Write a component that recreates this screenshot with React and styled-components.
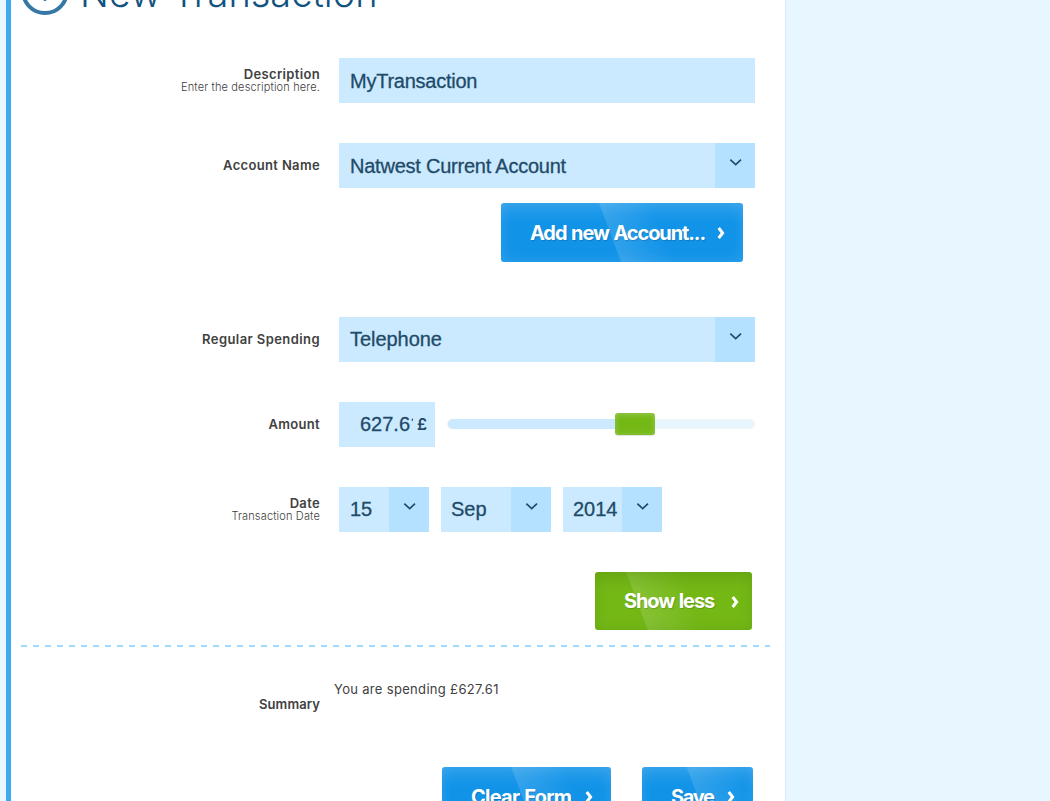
import React from "react";
import styled, { createGlobalStyle } from "styled-components";

const Global = createGlobalStyle`
  *, *::before, *::after { box-sizing: border-box; }
  html, body { margin: 0; height: 801px; overflow: hidden; background: #e8f6ff; }
  body { font-family: Inter, "Liberation Sans", sans-serif; color: #414141; }
  button, input { font: inherit; border: 0; border-radius: 0; padding: 0; margin: 0; }
`;

const Panel = styled.main`
  width: 780px;
  height: 801px;
  margin-left: 6px;
  padding: 0 15px 0 10px;
  overflow: hidden;
  background: #fff;
  border-left: 5px solid #40a9ee;
  border-right: 1px solid #d9e8f2;
`;

const Header = styled.header`
  display: flex;
  align-items: center;
  gap: 11px;
  height: 48px;
  margin-top: -33px;
  color: #11527f;
`;

const Title = styled.h1`
  margin: 0;
  padding-top: 3px;
  font-size: 38px;
  font-weight: 300;
  line-height: 48px;
  letter-spacing: 0;
  white-space: nowrap;
`;

const Row = styled.section`
  display: grid;
  grid-template-columns: 299px 416px;
  column-gap: 19px;
  align-items: center;
  height: 45px;
  margin-top: ${(p) => p.$top ?? 40}px;
`;

const Label = styled.div`
  padding-top: ${(p) => p.$drop ?? 0}px;
  text-align: right;
  font-size: 13px;
  font-weight: 600;
  line-height: 13px;
  letter-spacing: ${(p) => p.$spacing ?? 0.34}px;
  white-space: nowrap;
`;

const Hint = styled.div`
  font-size: 11px;
  font-weight: 300;
  line-height: 12px;
  letter-spacing: 0.15px;
`;

const fieldText = `
  font-family: "Liberation Sans", Arial, sans-serif;
  font-size: 20px;
  line-height: 45px;
  color: #1f4a68;
  -webkit-text-stroke: 0.3px #1f4a68;
`;

const TextField = styled.div`
  ${fieldText}
  height: 45px;
  padding: 1px 11px 0;
  letter-spacing: -0.25px;
  background: #cbeaff;
`;

const SelectBox = styled.div`
  ${fieldText}
  display: flex;
  justify-content: space-between;
  width: ${(p) => p.$width}px;
  height: 45px;
  padding-left: ${(p) => p.$inset ?? 10}px;
  background: #cbeaff;
  white-space: nowrap;
  letter-spacing: ${(p) => p.$spacing ?? 0}px;
  line-height: ${(p) => p.$line ?? 45}px;
`;

const Arrow = styled.span`
  flex: none;
  width: 40px;
  height: 45px;
  padding: 15px 0 0 14px;
  background: #b3e1ff;
  svg { display: block; }
`;

const DateFields = styled.div`
  display: flex;
  gap: 12px;
`;

const AmountFields = styled.div`
  display: flex;
  align-items: center;
  gap: 12px;
`;

const AmountBox = styled.div`
  ${fieldText}
  display: flex;
  width: 96px;
  height: 45px;
  padding-left: 21px;
  background: #cbeaff;
`;

const AmountValue = styled.span`
  width: 53px;
  overflow: hidden;
  clip-path: polygon(0 0, 100% 0, 100% 20px, 50px 20px, 50px 100%, 0 100%);
`;

const Currency = styled.span`
  margin-left: 4px;
  font-family: Inter, sans-serif;
  font-size: 16px;
  font-weight: 600;
  -webkit-text-stroke: 0;
`;

const Track = styled.div`
  display: flex;
  align-items: center;
  width: 308px;
  height: 10px;
  margin-bottom: 2px;
  border: 1px solid #f0f2f3;
  border-radius: 5px;
  background: #e8f6ff;
`;

const Filled = styled.div`
  width: 167px;
  height: 10px;
  border-radius: 5px 0 0 5px;
  background: #cbeaff;
`;

const Thumb = styled.div`
  width: 40px;
  height: 22px;
  border-radius: 3px;
  background: #74b816;
  box-shadow: inset 0 0 6px rgba(255, 255, 255, 0.2), inset 0 3px 5px rgba(255, 255, 255, 0.1), 0 1px 1px rgba(0, 0, 0, 0.12);
`;

const Actions = styled.div`
  display: flex;
  justify-content: flex-end;
  gap: 31px;
  margin-top: ${(p) => p.$top}px;
  padding-right: ${(p) => p.$right}px;
`;

const ActionButton = styled.button`
  display: flex;
  align-items: center;
  justify-content: space-between;
  flex: none;
  width: ${(p) => p.$width}px;
  height: ${(p) => p.$height ?? 59}px;
  padding: 0 ${(p) => (p.$green ? 12 : 17)}px 0 29px;
  border-radius: 3px;
  font-size: 20px;
  font-weight: 700;
  letter-spacing: ${(p) => p.$spacing}px;
  word-spacing: 1px;
  color: #fff;
  text-shadow: 1px 1px 1px rgba(0, 0, 0, 0.16);
  white-space: nowrap;
  background:
    linear-gradient(${(p) => (p.$green ? "rgba(60,110,0,.12)" : "rgba(255,255,255,.09)")}, transparent 35%),
    linear-gradient(69.5deg, transparent ${(p) => p.$shine}px, rgba(255,255,255,.13) ${(p) => p.$shine + 1}px, transparent ${(p) => p.$shine + 52}px),
    ${(p) => (p.$green ? "#74b816" : "#1193e8")};
  box-shadow: inset 0 0 14px ${(p) => (p.$green ? "rgba(50,100,0,.16)" : "rgba(255,255,255,.13)")};
`;

const Divider = styled.div`
  height: 2px;
  margin-top: 15px;
  width: 749px;
  background: repeating-linear-gradient(90deg, #a0dbff 0 6px, transparent 6px 12px);
`;

const Summary = styled.p`
  align-self: start;
  margin: 0 0 0 -5px;
  font-size: 13px;
  line-height: 16px;
  letter-spacing: 0.32px;
`;

const PlusCircle = () => (
  <svg width="48" height="48" viewBox="0 0 48 48" fill="none" stroke="#3678a4">
    <circle cx="24" cy="24" r="22" strokeWidth="4" />
    <path d="M24 14v20M14 24h20" strokeWidth="2.4" />
  </svg>
);

const Chevron = () => (
  <svg width="13" height="9" viewBox="0 0 13 9" fill="none" stroke="#1f4a68" strokeWidth="1.6">
    <path d="M1.3 1.6 6.7 6.7 12 1.6" />
  </svg>
);

const Next = () => (
  <svg width="10" height="13" viewBox="0 0 10 13" fill="none" stroke="#fff" strokeWidth="3">
    <path d="M2.7 2 6.6 7 2.7 12" />
  </svg>
);

const Select = ({ children, width, spacing, inset, line }) => (
  <SelectBox $width={width} $spacing={spacing} $inset={inset} $line={line}>
    {children}
    <Arrow><Chevron /></Arrow>
  </SelectBox>
);

const Button = ({ children, width, height, spacing, shine, green }) => (
  <ActionButton $width={width} $height={height} $spacing={spacing} $shine={shine} $green={green}>
    {children}
    <Next />
  </ActionButton>
);

export default function App() {
  return (
    <>
      <Global />
      <Panel>
        <Header>
          <PlusCircle />
          <Title>New Transaction</Title>
        </Header>
        <Row $top={43}>
          <Label>Description<Hint>Enter the description here.</Hint></Label>
          <TextField>MyTransaction</TextField>
        </Row>
        <Row>
          <Label>Account Name</Label>
          <Select width={416} inset={11} spacing={-0.23} line={47}>Natwest Current Account</Select>
        </Row>
        <Actions $top={15} $right={27}>
          <Button width={242} spacing={-1.1} shine={112}>Add new Account...</Button>
        </Actions>
        <Row $top={55}>
          <Label $spacing={0.42}>Regular Spending</Label>
          <Select width={416} inset={11} spacing={-0.05}>Telephone</Select>
        </Row>
        <Row>
          <Label>Amount</Label>
          <AmountFields>
            <AmountBox>
              <AmountValue>627.61</AmountValue>
              <Currency>£</Currency>
            </AmountBox>
            <Track><Filled /><Thumb /></Track>
          </AmountFields>
        </Row>
        <Row>
          <Label>Date<Hint>Transaction Date</Hint></Label>
          <DateFields>
            <Select width={90} inset={11}>15</Select>
            <Select width={110}>Sep</Select>
            <Select width={99}>2014</Select>
          </DateFields>
        </Row>
        <Actions $top={40} $right={18}>
          <Button green width={157} height={58} spacing={-1.1} shine={49}>Show less</Button>
        </Actions>
        <Divider />
        <Row $top={34}>
          <Label $spacing={0.1} $drop={2}>Summary</Label>
          <Summary>You are spending £627.61</Summary>
        </Row>
        <Actions $top={41} $right={17}>
          <Button width={169} spacing={-0.75} shine={85}>Clear Form</Button>
          <Button width={111} spacing={-1.3} shine={62}>Save</Button>
        </Actions>
      </Panel>
    </>
  );
}
